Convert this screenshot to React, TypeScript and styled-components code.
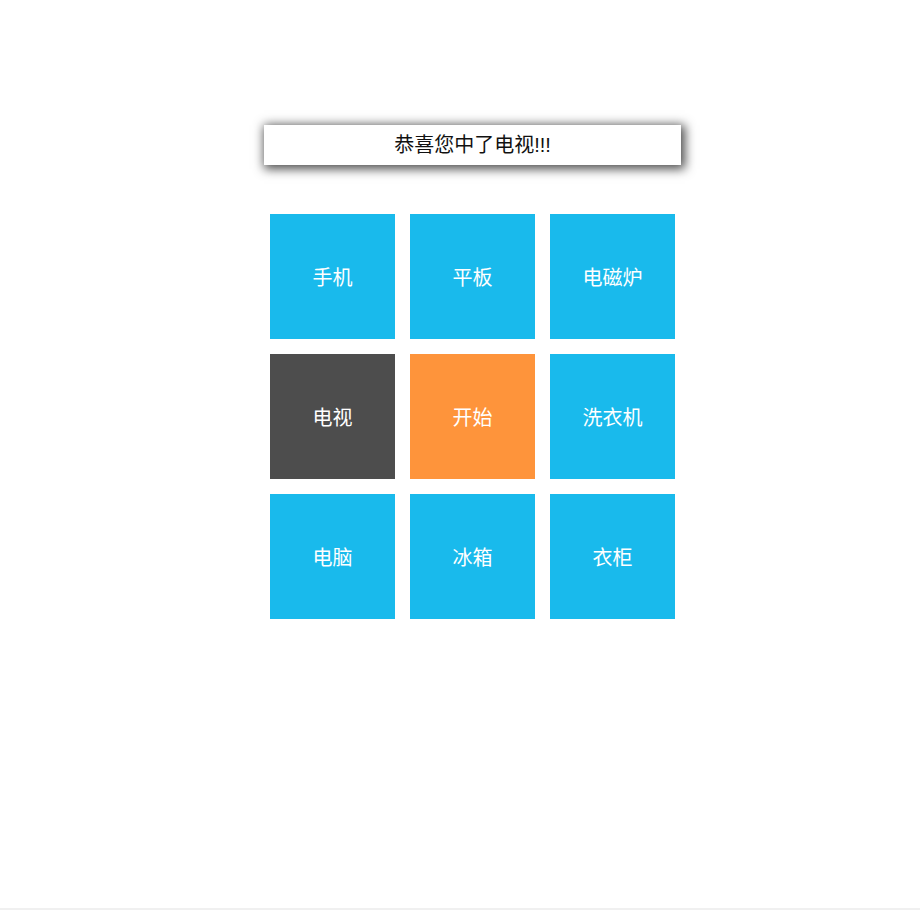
import styled, { createGlobalStyle } from "styled-components";

const GlobalStyle = createGlobalStyle`
  body {
    margin: 0;
    background: #fff;
    font-family: "Liberation Sans", "Noto Sans CJK SC", sans-serif;
  }
`;

const prizes = [
  { name: "手机", kind: "normal" },
  { name: "平板", kind: "normal" },
  { name: "电磁炉", kind: "normal" },
  { name: "电视", kind: "active" },
  { name: "开始", kind: "start" },
  { name: "洗衣机", kind: "normal" },
  { name: "电脑", kind: "normal" },
  { name: "冰箱", kind: "normal" },
  { name: "衣柜", kind: "normal" },
];

type Kind = "normal" | "active" | "start";

const colors: Record<Kind, string> = {
  normal: "#19baec",
  active: "#4d4d4d",
  start: "#fe943b",
};

function App() {
  return (
    <Page>
      <GlobalStyle />
      <Column>
        <Result>恭喜您中了电视!!!</Result>
        <Board>
          {prizes.map((p) => (
            <Cell key={p.name} kind={p.kind as Kind}>
              {p.name}
            </Cell>
          ))}
        </Board>
      </Column>
    </Page>
  );
}

const Page = styled.div`
  width: 920px;
  height: 910px;
  box-sizing: border-box;
  padding: 125px 0 0 25px;
  border-bottom: 2px solid #f0f0f0;
`;

const Column = styled.div`
  width: 417px;
  margin: 0 auto;
  display: flex;
  flex-direction: column;
  align-items: center;
`;

const Result = styled.div`
  width: 417px;
  height: 40px;
  line-height: 40px;
  text-align: center;
  background: #fff;
  color: #111;
  font-size: 20px;
  box-shadow: 2px 2px 10px 2px rgba(0, 0, 0, 0.7);
`;

const Board = styled.div`
  margin-top: 49px;
  display: grid;
  grid-template-columns: repeat(3, 125px);
  grid-auto-rows: 125px;
  gap: 15px;
`;

const Cell = styled.div<{ kind: Kind }>`
  background: ${(p) => colors[p.kind]};
  color: #fff;
  font-size: 20px;
  display: flex;
  align-items: center;
  justify-content: center;
`;

export default App;
